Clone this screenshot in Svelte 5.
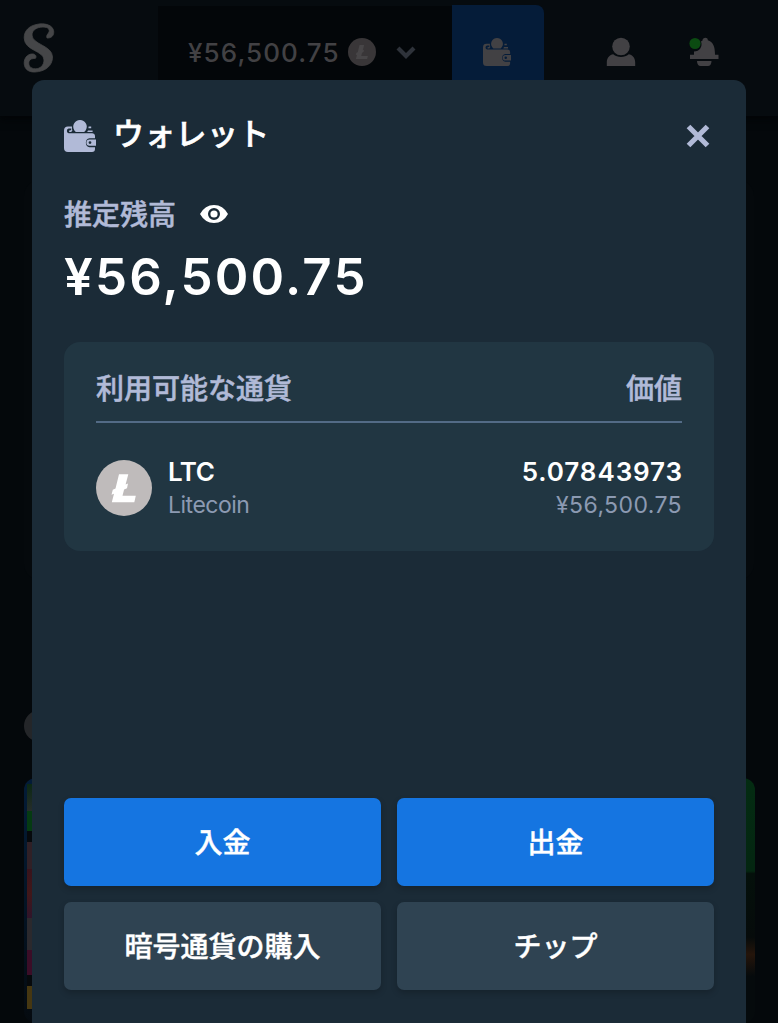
<script lang="ts">
  const balance = '¥56,500.75';

  const currencies = [
    { code: 'LTC', name: 'Litecoin', amount: '5.07843973', value: '¥56,500.75' }
  ];

  const actions = [
    { label: '入金', primary: true },
    { label: '出金', primary: true },
    { label: '暗号通貨の購入', primary: false },
    { label: 'チップ', primary: false }
  ];
</script>

{#snippet walletIcon()}
  <svg class="wallet-icon" viewBox="0 0 32 32" aria-hidden="true">
    <path d="M4 6.6H8A8.8 8.8 0 0 0 8.4 10.6L7.2 12H5.5L4.8 11L6 10.2H7.2V8.6H4.6A2.4 2.4 0 0 0 4.6 13.2H28A3 3 0 0 1 31 16V18.2H25.5A4.6 4.6 0 0 0 25.5 27.2H31V29A3 3 0 0 1 28 32H4A4 4 0 0 1 0 28V10.5A4 4 0 0 1 4 6.6Z" />
    <path d="M24.6 6.6H27.2V8.2H24.4ZM24 10.4H28.6V12H23.2Z" />
    <path d="M16 0A6.7 6.7 0 0 1 21.6 10.4L20.2 12H11.8L10.4 10.4A6.7 6.7 0 0 1 16 0Z" />
    <path fill-rule="evenodd" d="M25.6 19.4H32V25.8H25.6A3.2 3.2 0 0 1 25.6 19.4ZM26 21.2A1.4 1.4 0 1 0 26 24A1.4 1.4 0 1 0 26 21.2Z" />
  </svg>
{/snippet}

{#snippet coinIcon()}
  <svg class="coin" viewBox="0 0 56 56" aria-hidden="true">
    <circle class="coin-disc" cx="28" cy="28" r="28" />
    <path class="coin-mark" d="M23 14.2H32.3L29.6 24.4L32 23.4L31 28.2L28.1 29.5L26.5 35.8H39.8L38.3 42.2H15.8L18 33.7L15.5 34.7L16.8 29.7L19.5 28.6Z" />
  </svg>
{/snippet}

<div class="screen">
  <div class="backdrop">
    <header>
      <svg class="logo" viewBox="0 0 32 50" aria-hidden="true">
        <path d="M24 15C30 15.500 32 10 30 6C27.500 1 20 .3 15 1.200C6 2.500 1 8 1.200 15C1.500 28 21 27.500 21 37C21 42.500 17 45.800 12.500 45.800C7 45.800 5 42 6 38.500C6.800 36 9 35.500 12.500 35.300C14 33 12 30.500 8.500 31C4 31.500 1 35.500 1.200 40.500C1.500 46.500 6 49.300 12 49C22 48.500 29.500 43 29.500 34C29.500 22.500 9 21.500 9 12C9 7 14 4 20 4C25.500 4 27.500 7 25.500 10C24.500 11.500 23 12.500 24 15Z" />
      </svg>
      <div class="balance-box">
        <span>{balance}</span>
        {@render coinIcon()}
        <svg class="chevron" viewBox="0 0 20 14" aria-hidden="true">
          <path d="M2 3L10 11L18 3" />
        </svg>
      </div>
      <div class="wallet-tab">{@render walletIcon()}</div>
      <svg class="user" viewBox="0 0 30 30" aria-hidden="true">
        <circle cx="15" cy="9.500" r="8.800" />
        <path d="M.8 29V25.500C.8 20.500 4 17.600 7.200 17.200C11.500 20.800 18.500 20.800 22.800 17.200C26 17.600 29.200 20.500 29.200 25.500V29Z" />
      </svg>
      <svg class="bell" viewBox="0 0 30 30" aria-hidden="true">
        <path d="M13.500 3.500C13.500 0 19 0 18.800 3.200C24 5 26 9 26 17.800H29.500V22H1V17.800H5V14.500C10.500 14.500 14 9.500 12 4.500Z" />
        <path d="M8 24H22.500C22.500 27 21 29 19 29H11.500C9.500 29 8 27 8 24Z" />
        <circle class="dot" cx="6" cy="6.500" r="5.600" />
      </svg>
    </header>
    <div class="panel"></div>
    <div class="bubble"></div>
    <div class="games">
      <div class="game left">
        <i class="leaf"></i><i class="green"></i><i class="dark"></i><i class="pink"></i><i class="red"></i><i class="grey"></i><i class="rose"></i><i class="dark"></i><i class="gold"></i>
      </div>
      <div class="game right"></div>
    </div>
  </div>

  <main class="modal">
    <div class="title-row">
      {@render walletIcon()}
      <h1>ウォレット</h1>
      <button class="close" aria-label="閉じる">
        <svg viewBox="0 0 24 24" aria-hidden="true"><path d="M2.500 2.500L21.500 21.500M21.500 2.500L2.500 21.500" /></svg>
      </button>
    </div>

    <div class="estimate">
      <span>推定残高</span>
      <svg class="eye" viewBox="0 0 28 18" aria-hidden="true">
        <path fill-rule="evenodd" d="M0 9Q5 0 14 0T28 9Q23 18 14 18T0 9ZM14 3A6 6 0 1 0 14 15A6 6 0 1 0 14 3Z" />
        <circle cx="14" cy="9" r="3.600" />
      </svg>
    </div>
    <div class="total">{balance}</div>

    <section class="currencies">
      <div class="list-head">
        <span>利用可能な通貨</span>
        <span>価値</span>
      </div>
      {#each currencies as currency}
        <div class="currency">
          {@render coinIcon()}
          <div class="name">
            <strong>{currency.code}</strong>
            <small>{currency.name}</small>
          </div>
          <div class="value">
            <strong>{currency.amount}</strong>
            <small>{currency.value}</small>
          </div>
        </div>
      {/each}
    </section>

    <div class="actions">
      {#each actions as action}
        <button class:primary={action.primary}>{action.label}</button>
      {/each}
    </div>
  </main>
</div>

<style>
  :global(body) {
    background: #060b0f;
  }

  .screen {
    position: relative;
    width: 778px;
    height: 1023px;
    overflow: hidden;
    box-sizing: border-box;
    padding: 80px 32px 0;
    font-family: Inter, "Noto Sans CJK JP", sans-serif;
    color: #fff;
  }

  .screen * {
    box-sizing: border-box;
  }

  .backdrop {
    position: absolute;
    inset: 0;
    background: #04080b;
  }

  header {
    display: flex;
    align-items: flex-start;
    height: 116px;
    background: #060b0f;
    box-shadow: 0 3px 8px #020406;
    color: #424144;
  }

  svg {
    display: block;
    flex: none;
    fill: currentColor;
  }

  .logo {
    width: 32px;
    height: 50px;
    margin: 23px 0 0 23px;
    fill: #454648;
    stroke: #454648;
    stroke-width: 0.8;
  }

  .balance-box {
    display: flex;
    align-items: center;
    width: 294px;
    height: 92px;
    margin: 6px 0 0 103px;
    padding-left: 30px;
    background: #030609;
    font-size: 26px;
    font-weight: 500;
    letter-spacing: 1.1px;
  }

  .balance-box span {
    width: 152px;
    white-space: nowrap;
  }

  .balance-box .coin {
    width: 28px;
    height: 28px;
    margin: 0 20px 0 8px;
  }

  .balance-box .coin-disc {
    fill: #393638;
  }

  .balance-box .coin-mark {
    fill: #484648;
  }

  .chevron {
    width: 20px;
    height: 14px;
    fill: none;
    stroke: #2e323a;
    stroke-width: 4.2;
  }

  .wallet-tab {
    width: 92px;
    height: 100px;
    margin-top: 5px;
    padding: 33px 0 0 31px;
    background: #051c39;
    border-radius: 0 8px 0 0;
  }

  .wallet-tab .wallet-icon {
    width: 28px;
    height: 28px;
  }

  .user {
    width: 30px;
    height: 30px;
    margin: 37px 0 0 62px;
  }

  .bell {
    width: 30px;
    height: 30px;
    margin: 37px 0 0 53px;
  }

  .dot {
    fill: #0b4b11;
  }

  .panel {
    height: 400px;
    margin: 64px 24px 0;
    background: #05090c;
    border-radius: 16px;
  }

  .bubble {
    width: 32px;
    height: 32px;
    margin: 130px 0 0 24px;
    border-radius: 50%;
    background: #242629;
  }

  .games {
    display: flex;
    justify-content: space-between;
    margin: 36px 23px 0 24px;
  }

  .game {
    width: 200px;
    height: 245px;
    border-radius: 12px;
  }

  .game.left {
    display: flex;
    flex-direction: column;
    padding: 6px 0 0 3px;
    background: linear-gradient(#031c38, #031323 55%, #050a0f);
  }

  .game i {
    height: 27px;
    width: 100px;
  }

  .game .leaf {
    background: linear-gradient(#0b2814, #262d2a);
  }

  .game .green {
    height: 20px;
    background: #053b12;
  }

  .game .dark {
    height: 11px;
    background: #06090c;
  }

  .game .pink {
    background: #302026;
  }

  .game .red {
    height: 49px;
    background: linear-gradient(#38131c, #411719, #30142a);
  }

  .game .grey {
    height: 32px;
    background: #2b292d;
  }

  .game .rose {
    height: 25px;
    background: #3b0d27;
  }

  .game .gold {
    height: 23px;
    background: #463711;
  }

  .game.right {
    background: linear-gradient(#042c12, #042611 38%, #04100b 39%, #060b0b 65%, #25150b 72%, #050a0c 81%);
  }

  .modal {
    position: relative;
    display: flex;
    flex-direction: column;
    height: 960px;
    padding: 40px 32px 0;
    background: #1b2b37;
    border-radius: 12px;
  }

  .title-row {
    display: flex;
    align-items: center;
    height: 32px;
    color: #b1bad7;
  }

  .modal .wallet-icon {
    width: 32px;
    height: 32px;
  }

  h1 {
    margin: -4px 0 0 17px;
    color: #fff;
    font-size: 31px;
    line-height: 32px;
    font-weight: 500;
    letter-spacing: 0.3px;
    -webkit-text-stroke: 0.6px;
  }

  button {
    border: 0;
    color: #fff;
    font: inherit;
  }

  .close {
    margin: 0 4px 0 auto;
    padding: 0;
    background: none;
  }

  .close svg {
    width: 24px;
    height: 24px;
    stroke: #b1bad7;
    stroke-width: 5.2;
  }

  .estimate {
    display: flex;
    align-items: center;
    height: 40px;
    margin-top: 42px;
    color: #b1bad7;
    font-size: 28px;
    font-weight: 500;
    -webkit-text-stroke: 0.5px;
  }

  .estimate span {
    margin-top: -3px;
  }

  .eye {
    width: 28px;
    height: 18px;
    margin-left: 24px;
    fill: #fff;
  }

  .total {
    height: 60px;
    margin-top: 13px;
    font-size: 51px;
    line-height: 60px;
    font-weight: 600;
    letter-spacing: 2.2px;
    white-space: nowrap;
  }

  .currencies {
    height: 209px;
    margin-top: 35px;
    padding: 27px 32px 0;
    background: #213642;
    border-radius: 16px;
  }

  .list-head {
    display: flex;
    justify-content: space-between;
    height: 54px;
    border-bottom: 2px solid #536b86;
    color: #b1bad7;
    font-size: 28px;
    line-height: 41px;
    font-weight: 500;
    -webkit-text-stroke: 0.5px;
  }

  .currency {
    display: flex;
    align-items: center;
    margin-top: 32px;
  }

  .currency .coin {
    width: 56px;
    height: 56px;
    margin: 0 16px 2px 0;
  }

  .coin-disc {
    fill: #bfbbbb;
  }

  .coin-mark {
    fill: #fff;
  }

  .name,
  .value {
    display: flex;
    flex-direction: column;
  }

  .value {
    margin-left: auto;
    text-align: right;
  }

  strong {
    font-size: 26px;
    line-height: 34px;
    font-weight: 600;
  }

  small {
    color: #8c9ab2;
    font-size: 23px;
    line-height: 33px;
  }

  .name strong,
  .name small {
    letter-spacing: -0.5px;
  }

  .value strong {
    margin-right: -1px;
    letter-spacing: 0.9px;
  }

  .value small {
    letter-spacing: 0.4px;
  }

  .actions {
    display: grid;
    grid-template-columns: 1fr 1fr;
    grid-auto-rows: 88px;
    gap: 16px;
    margin-top: 247px;
  }

  .actions button {
    padding: 0 0 2px;
    background: #2f4352;
    border-radius: 7px;
    box-shadow: 0 3px 6px rgba(0, 0, 0, 0.2);
    font-size: 28px;
    font-weight: 500;
    -webkit-text-stroke: 0.4px;
  }

  .actions .primary {
    background: #1575e1;
  }
</style>
